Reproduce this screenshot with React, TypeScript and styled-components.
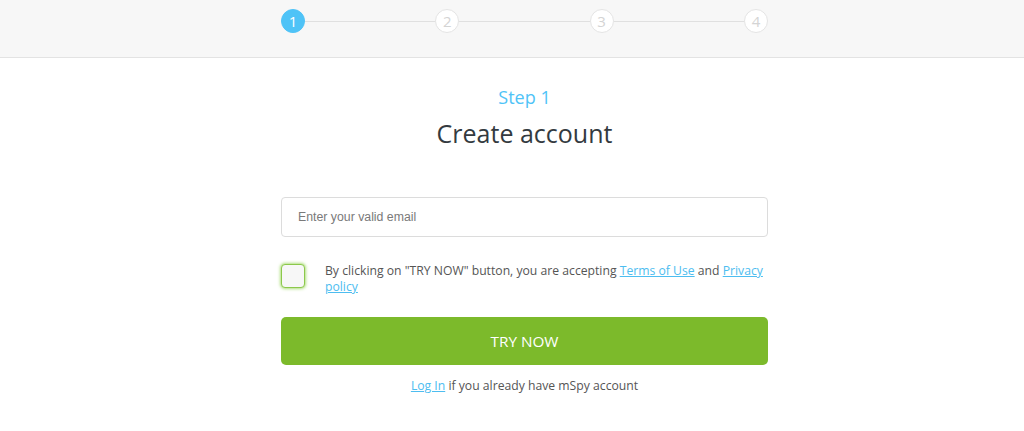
import React from "react";
import styled, { createGlobalStyle } from "styled-components";

const GlobalStyle = createGlobalStyle`
  html, body {
    margin: 0;
    padding: 0;
    background: #ffffff;
    font-family: "Open Sans", "Liberation Sans", sans-serif;
  }
`;

const Page = styled.div`
  width: 1024px;
  min-height: 431px;
  background: #ffffff;
`;

const Header = styled.header`
  height: 58px;
  background: #f7f7f7;
  border-bottom: 1px solid #e3e3e3;
  display: flex;
  justify-content: center;
  padding: 9px 0 0 25px;
  box-sizing: border-box;
`;

const Stepper = styled.div`
  width: 487px;
  height: 24px;
  display: flex;
  align-items: center;
`;

const StepDot = styled.div<{ $active?: boolean }>`
  width: 24px;
  height: 24px;
  flex: none;
  border-radius: 50%;
  box-sizing: border-box;
  display: flex;
  align-items: center;
  justify-content: center;
  font-size: 15px;
  background: ${(p) => (p.$active ? "#4fc3f7" : "#ffffff")};
  border: 1px solid ${(p) => (p.$active ? "#4fc3f7" : "#e4e4e4")};
  color: ${(p) => (p.$active ? "#ffffff" : "#d4d4d4")};
`;

const StepLine = styled.div`
  flex: 1;
  height: 1px;
  background: #e0e0e0;
`;

const Main = styled.main`
  display: flex;
  flex-direction: column;
  align-items: center;
  padding: 27px 0 0 25px;
`;

const StepLabel = styled.div`
  font-size: 18px;
  line-height: 24px;
  color: #4fc3f7;
`;

const Title = styled.h1`
  margin: 8px 0 0;
  font-size: 25px;
  line-height: 32px;
  font-weight: 400;
  color: #333a40;
`;

const Form = styled.form`
  width: 487px;
  margin-top: 48px;
  display: flex;
  flex-direction: column;
`;

const EmailInput = styled.input`
  height: 40px;
  box-sizing: border-box;
  border: 1px solid #dcdcdc;
  border-radius: 4px;
  padding: 0 16px;
  font-family: "Liberation Sans", Arial, sans-serif;
  font-size: 12.3px;
  color: #333;
  outline: none;
  &::placeholder {
    color: #7a7a7a;
  }
`;

const AgreeRow = styled.label`
  margin-top: 27px;
  display: flex;
  align-items: flex-start;
  gap: 20px;
`;

const CheckBox = styled.span`
  width: 24px;
  height: 24px;
  flex: none;
  box-sizing: border-box;
  border: 1px solid #8cc84b;
  border-radius: 4px;
  background: #f7f7f7;
  box-shadow: 0 0 3px 1px rgba(140, 210, 70, 0.7);
`;

const AgreeText = styled.span`
  font-size: 12.2px;
  line-height: 16px;
  color: #555;
  margin-top: -1px;
`;

const Link = styled.a`
  color: #4dbdf0;
  text-decoration: underline;
`;

const SubmitButton = styled.button`
  margin-top: 22px;
  height: 48px;
  border: none;
  border-radius: 5px;
  background: #7cba2b;
  color: #ffffff;
  font-family: "Open Sans", "Liberation Sans", sans-serif;
  font-size: 15.3px;
  cursor: pointer;
`;

const LoginNote = styled.p`
  margin: 13px 0 0;
  text-align: center;
  font-size: 12.2px;
  line-height: 16px;
  color: #555;
`;

export default function App() {
  const steps = [1, 2, 3, 4];
  return (
    <Page>
      <GlobalStyle />
      <Header>
        <Stepper>
          {steps.map((n, i) => (
            <React.Fragment key={n}>
              {i > 0 && <StepLine />}
              <StepDot $active={n === 1}>{n}</StepDot>
            </React.Fragment>
          ))}
        </Stepper>
      </Header>
      <Main>
        <StepLabel>Step 1</StepLabel>
        <Title>Create account</Title>
        <Form onSubmit={(e) => e.preventDefault()}>
          <EmailInput type="email" placeholder="Enter your valid email" />
          <AgreeRow>
            <CheckBox />
            <AgreeText>
              By clicking on "TRY NOW" button, you are accepting{" "}
              <Link href="#">Terms of Use</Link> and{" "}
              <Link href="#">Privacy policy</Link>
            </AgreeText>
          </AgreeRow>
          <SubmitButton type="submit">TRY NOW</SubmitButton>
          <LoginNote>
            <Link href="#">Log In</Link> if you already have mSpy account
          </LoginNote>
        </Form>
      </Main>
    </Page>
  );
}
